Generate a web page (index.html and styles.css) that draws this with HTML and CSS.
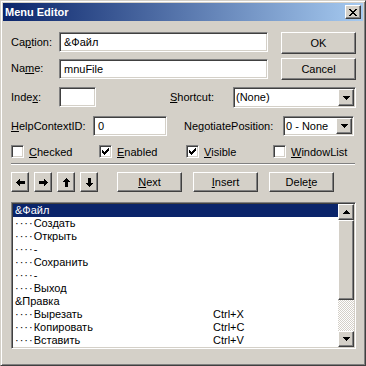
FILE: index.html
```html
<!DOCTYPE html>
<html lang="ru">
<head>
    <meta charset="UTF-8">
    <title>Menu Editor</title>
    <link rel="stylesheet" href="styles.css">
</head>
<body>
<div class="window">
    <div class="titlebar">
        <span class="title">Menu Editor</span>
        <span class="btn close">
            <svg width="8" height="7" viewBox="0 0 8 7"><path d="M0 0h2v1H0z M6 0h2v1H6z M1 1h2v1H1z M5 1h2v1H5z M2 2h4v1H2z M3 3h2v1H3z M2 4h4v1H2z M1 5h2v1H1z M5 5h2v1H5z M0 6h2v1H0z M6 6h2v1H6z"/></svg>
        </span>
    </div>

    <div class="client">
        <div class="row row-caption">
            <span class="lbl lbl-main">Ca<u>p</u>tion:</span>
            <div class="field field-wide">&amp;Файл</div>
            <div class="btn btn-side">OK</div>
        </div>

        <div class="row row-name">
            <span class="lbl lbl-main">Na<u>m</u>e:</span>
            <div class="field field-wide field-name">mnuFile</div>
            <div class="btn btn-side">Cancel</div>
        </div>

        <div class="row row-index">
            <span class="lbl lbl-main">Inde<u>x</u>:</span>
            <div class="field field-index"></div>
            <span class="lbl lbl-shortcut"><u>S</u>hortcut:</span>
            <div class="combo combo-shortcut">
                <span class="combo-text">(None)</span>
                <span class="btn drop"><svg width="7" height="4" viewBox="0 0 7 4"><path d="M0 0h7v1H0z M1 1h5v1H1z M2 2h3v1H2z M3 3h1v1H3z"/></svg></span>
            </div>
        </div>

        <div class="row row-help">
            <span class="lbl lbl-help"><u>H</u>elpContextID:</span>
            <div class="field field-help">0</div>
            <span class="lbl lbl-negotiate">Ne<u>g</u>otiatePosition:</span>
            <div class="combo combo-negotiate">
                <span class="combo-text">0 - None</span>
                <span class="btn drop"><svg width="7" height="4" viewBox="0 0 7 4"><path d="M0 0h7v1H0z M1 1h5v1H1z M2 2h3v1H2z M3 3h1v1H3z"/></svg></span>
            </div>
        </div>

        <div class="row row-checks">
            <span class="check check-1"><span class="box"></span><u>C</u>hecked</span>
            <span class="check check-2"><span class="box"><svg width="7" height="7" viewBox="0 0 7 7"><path d="M6 0h1v1H6z M5 1h2v1H5z M0 2h1v1H0z M4 2h3v1H4z M0 3h2v1H0z M3 3h3v1H3z M0 4h5v1H0z M1 5h3v1H1z M2 6h1v1H2z"/></svg></span><u>E</u>nabled</span>
            <span class="check check-3"><span class="box"><svg width="7" height="7" viewBox="0 0 7 7"><path d="M6 0h1v1H6z M5 1h2v1H5z M0 2h1v1H0z M4 2h3v1H4z M0 3h2v1H0z M3 3h3v1H3z M0 4h5v1H0z M1 5h3v1H1z M2 6h1v1H2z"/></svg></span><u>V</u>isible</span>
            <span class="check"><span class="box"></span><u>W</u>indowList</span>
        </div>

        <div class="sep"></div>

        <div class="row row-tools">
            <span class="btn arrow"><svg width="9" height="7" viewBox="0 0 9 7" shape-rendering="crispEdges"><polygon points="0,3.5 4,0 4,2 9,2 9,5 4,5 4,7"/></svg></span>
            <span class="btn arrow"><svg width="9" height="7" viewBox="0 0 9 7" shape-rendering="crispEdges"><polygon points="9,3.5 5,0 5,2 0,2 0,5 5,5 5,7"/></svg></span>
            <span class="btn arrow"><svg width="7" height="9" viewBox="0 0 7 9" shape-rendering="crispEdges"><polygon points="3.5,0 7,4 5,4 5,9 2,9 2,4 0,4"/></svg></span>
            <span class="btn arrow"><svg width="7" height="9" viewBox="0 0 7 9" shape-rendering="crispEdges"><polygon points="3.5,9 7,5 5,5 5,0 2,0 2,5 0,5"/></svg></span>
            <span class="btn btn-act btn-next"><u>N</u>ext</span>
            <span class="btn btn-act"><u>I</u>nsert</span>
            <span class="btn btn-act">Dele<u>t</u>e</span>
        </div>

        <div class="list">
            <div class="items">
                <div class="item selected"><span class="name">&amp;Файл</span></div>
                <div class="item"><span class="name"><span class="ind">····</span>Создать</span></div>
                <div class="item"><span class="name"><span class="ind">····</span>Открыть</span></div>
                <div class="item"><span class="name"><span class="ind">····</span>-</span></div>
                <div class="item"><span class="name"><span class="ind">····</span>Сохранить</span></div>
                <div class="item"><span class="name"><span class="ind">····</span>-</span></div>
                <div class="item"><span class="name"><span class="ind">····</span>Выход</span></div>
                <div class="item"><span class="name">&amp;Правка</span></div>
                <div class="item"><span class="name"><span class="ind">····</span>Вырезать</span><span>Ctrl+X</span></div>
                <div class="item"><span class="name"><span class="ind">····</span>Копировать</span><span>Ctrl+C</span></div>
                <div class="item"><span class="name"><span class="ind">····</span>Вставить</span><span>Ctrl+V</span></div>
            </div>
            <div class="scrollbar">
                <span class="btn sb-btn"><svg width="7" height="4" viewBox="0 0 7 4"><path d="M3 0h1v1H3z M2 1h3v1H2z M1 2h5v1H1z M0 3h7v1H0z"/></svg></span>
                <span class="btn thumb"></span>
                <span class="track"></span>
                <span class="btn sb-btn"><svg width="7" height="4" viewBox="0 0 7 4"><path d="M0 0h7v1H0z M1 1h5v1H1z M2 2h3v1H2z M3 3h1v1H3z"/></svg></span>
            </div>
        </div>
    </div>
</div>
</body>
</html>
```

FILE: styles.css
```css
body {
    margin: 0;
    font-family: "Liberation Sans", Arial, sans-serif;
    font-size: 11px;
    color: #000;
}

.window {
    width: 366px;
    height: 366px;
    box-sizing: border-box;
    background: #d4d0c8;
    border: 1px solid;
    border-color: #d4d0c8 #404040 #404040 #d4d0c8;
    box-shadow: inset 1px 1px #fff, inset -1px -1px #808080;
    padding: 2px;
}

.titlebar {
    height: 18px;
    display: flex;
    align-items: center;
    justify-content: space-between;
    padding: 0 2px;
    background: linear-gradient(to right, #0a246a, #a6caf0);
}

.title {
    color: #fff;
    font-weight: bold;
}

.btn {
    box-sizing: border-box;
    display: flex;
    align-items: center;
    justify-content: center;
    background: #d4d0c8;
    border: 1px solid;
    border-color: #fff #404040 #404040 #fff;
    box-shadow: inset -1px -1px #808080;
}

.close {
    width: 16px;
    height: 14px;
}

.client {
    padding-left: 8px;
}

.row {
    display: flex;
    align-items: flex-start;
}

.lbl {
    line-height: 20px;
}

.lbl-main { width: 48px; }
.lbl-help { width: 82px; }
.lbl-shortcut { width: 63px; margin-left: 74px; }
.lbl-negotiate { width: 99px; margin-left: 17px; }

.field,
.combo,
.list,
.box {
    box-sizing: border-box;
    background: #fff;
    border: 1px solid;
    border-color: #808080 #fff #fff #808080;
    box-shadow: inset 1px 1px #404040, inset -1px -1px #d4d0c8;
    padding: 1px;
}

.field {
    height: 20px;
    line-height: 16px;
    padding-left: 4px;
}

.row-caption { margin-top: 11px; }
.row-name { margin-top: 4px; }
.row-index { margin-top: 7px; }
.row-help { margin-top: 8px; }

.field-wide { width: 209px; }
.field-name { margin-top: 1px; }
.field-index { width: 37px; }
.field-help { width: 74px; }

.btn-side {
    width: 75px;
    height: 22px;
    margin-left: 13px;
}

.combo {
    display: flex;
}

.combo-text {
    flex: 1;
    line-height: 16px;
    padding-left: 1px;
}

.combo-shortcut { width: 123px; height: 21px; }
.combo-negotiate { width: 71px; height: 20px; }

.drop {
    width: 16px;
}

.row-checks {
    margin-top: 9px;
    height: 13px;
    align-items: center;
}

.check {
    display: flex;
    align-items: center;
}

.check-1 { width: 88px; }
.check-2 { width: 87px; }
.check-3 { width: 87px; }

.box {
    width: 13px;
    height: 13px;
    margin-right: 5px;
    padding: 2px;
    display: flex;
}

.sep {
    width: 344px;
    margin-top: 5px;
    border-top: 1px solid #808080;
    border-bottom: 1px solid #fff;
}

.row-tools {
    margin-top: 7px;
}

.arrow {
    width: 18px;
    height: 20px;
    margin-right: 5px;
}

.btn-act {
    width: 65px;
    height: 20px;
    margin-right: 11px;
}

.btn-next {
    margin-left: 14px;
}

.list {
    width: 345px;
    height: 147px;
    margin-top: 10px;
    display: flex;
}

.items {
    flex: 1;
}

.item {
    display: flex;
    height: 13px;
    line-height: 13px;
    padding-left: 2px;
    white-space: pre;
}

.item.selected {
    background: #0a246a;
    color: #fff;
}

.name {
    width: 198px;
}

.ind {
    letter-spacing: 1px;
}

.scrollbar {
    width: 16px;
    display: flex;
    flex-direction: column;
}

.sb-btn {
    height: 16px;
}

.thumb {
    height: 80px;
}

.track {
    flex: 1;
    background: repeating-conic-gradient(#fff 0 25%, #d4d0c8 0 50%) 0 0 / 2px 2px;
}
```
